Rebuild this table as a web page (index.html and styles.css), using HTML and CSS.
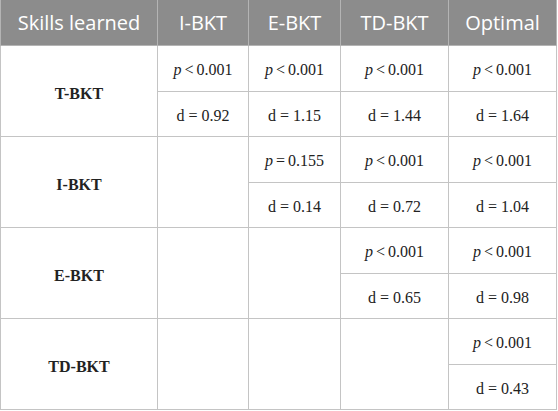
FILE: index.html
```html
<!DOCTYPE html>
<html>
<head>
<meta charset="utf-8">
<link rel="stylesheet" href="styles.css">
</head>
<body>
<table class="stats">
  <colgroup>
    <col class="c1"><col class="c2"><col class="c3"><col class="c4"><col class="c5">
  </colgroup>
  <thead>
    <tr>
      <th>Skills learned</th>
      <th>I-BKT</th>
      <th>E-BKT</th>
      <th>TD-BKT</th>
      <th>Optimal</th>
    </tr>
  </thead>
  <tbody>
    <tr class="top">
      <td class="label" rowspan="2">T-BKT</td>
      <td class="pv"><i>p</i> &lt; 0.001</td>
      <td class="pv"><i>p</i> &lt; 0.001</td>
      <td class="pv"><i>p</i> &lt; 0.001</td>
      <td class="pv"><i>p</i> &lt; 0.001</td>
    </tr>
    <tr class="bot">
      <td>d = 0.92</td>
      <td>d = 1.15</td>
      <td>d = 1.44</td>
      <td>d = 1.64</td>
    </tr>
    <tr class="top">
      <td class="label" rowspan="2">I-BKT</td>
      <td rowspan="2"></td>
      <td class="pv"><i>p</i> = 0.155</td>
      <td class="pv"><i>p</i> &lt; 0.001</td>
      <td class="pv"><i>p</i> &lt; 0.001</td>
    </tr>
    <tr class="bot">
      <td>d = 0.14</td>
      <td>d = 0.72</td>
      <td>d = 1.04</td>
    </tr>
    <tr class="top">
      <td class="label" rowspan="2">E-BKT</td>
      <td rowspan="2"></td>
      <td rowspan="2"></td>
      <td class="pv"><i>p</i> &lt; 0.001</td>
      <td class="pv"><i>p</i> &lt; 0.001</td>
    </tr>
    <tr class="bot">
      <td>d = 0.65</td>
      <td>d = 0.98</td>
    </tr>
    <tr class="top">
      <td class="label" rowspan="2">TD-BKT</td>
      <td rowspan="2"></td>
      <td rowspan="2"></td>
      <td rowspan="2"></td>
      <td class="pv"><i>p</i> &lt; 0.001</td>
    </tr>
    <tr class="bot">
      <td>d = 0.43</td>
    </tr>
  </tbody>
</table>
</body>
</html>
```
FILE: styles.css
```css
html, body {
  margin: 0;
  padding: 0;
  background: #ffffff;
}
.stats {
  border-collapse: collapse;
  table-layout: fixed;
  width: 557px;
  margin: 0;
}
.c1 { width: 157px; }
.c2 { width: 91px; }
.c3 { width: 92px; }
.c4 { width: 108px; }
.c5 { width: 108px; }
.stats th {
  background: #8c8c8c;
  color: #ffffff;
  font-family: "Open Sans", "Noto Sans", sans-serif;
  font-weight: 400;
  font-size: 20px;
  height: 45px;
  padding: 0;
  text-align: center;
  vertical-align: middle;
  border: 1px solid #b4b4b4;
  border-top: none;
}
.stats td {
  font-family: "Liberation Serif", "DejaVu Serif", serif;
  font-size: 16px;
  color: #222222;
  text-align: center;
  vertical-align: middle;
  padding: 4px 0 0 0;
  height: 45.5px;
  box-sizing: border-box;
  border: 1px solid #c4c4c4;
}
.stats td.pv {
  word-spacing: -1px;
}
.stats td.label {
  font-weight: 700;
  padding-top: 6px;
}
.stats i {
  font-style: italic;
}
```
